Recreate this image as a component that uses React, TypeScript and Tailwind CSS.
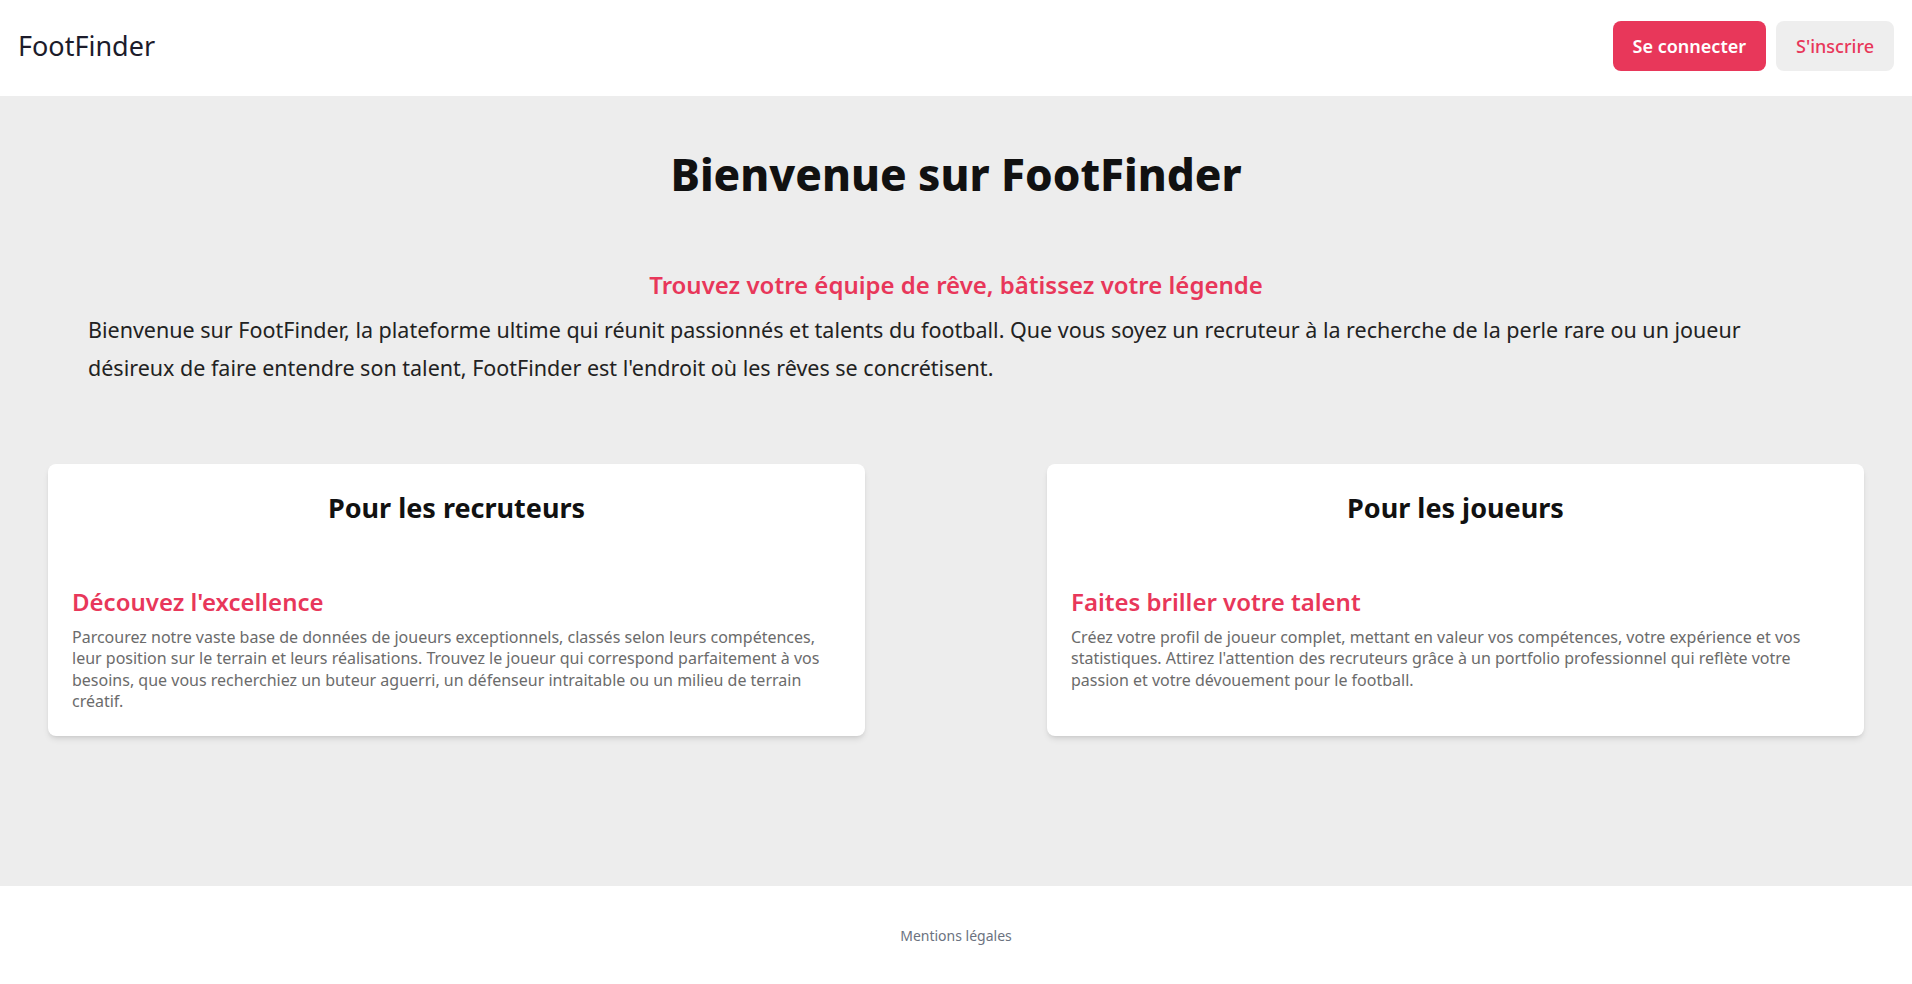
export default function App() {
  return (
    <div className="min-h-screen flex flex-col bg-white text-[#1a1a1a]" style={{ fontFamily: '"Noto Sans", "Open Sans", sans-serif' }}>
      <header className="h-24 flex items-center justify-between px-[18px] pb-1 bg-white">
        <span className="text-[27px] text-[#1c1c2b]">FootFinder</span>
        <div className="flex items-center gap-[10px]">
          <button className="h-[50px] px-5 rounded-lg bg-[#e8375a] text-white text-[18px] font-semibold">
            Se connecter
          </button>
          <button className="h-[50px] px-5 rounded-lg bg-[#eeeeee] text-[#e8375a] text-[18px] font-medium">
            S'inscrire
          </button>
        </div>
      </header>

      <main className="h-[790px] bg-[#ededed] flex flex-col">
        <h1 className="mt-[50px] text-center text-[44px] leading-[56px] font-extrabold text-[#111]">
          Bienvenue sur FootFinder
        </h1>
        <h2 className="mt-[67px] text-center text-[24px] leading-[32px] font-semibold text-[#e8375a]">
          Trouvez votre équipe de rêve, bâtissez votre légende
        </h2>
        <p className="mt-[10px] pl-[88px] pr-[130px] text-[21.5px] leading-[38px] text-[#222]">
          Bienvenue sur FootFinder, la plateforme ultime qui réunit passionnés et talents du football. Que vous soyez un recruteur à la recherche de la perle rare ou un joueur désireux de faire entendre son talent, FootFinder est l'endroit où les rêves se concrétisent.
        </p>

        <div className="mt-[77px] px-12 grid grid-cols-2 gap-[182px]">
          <div className="bg-white rounded-lg shadow-md px-6 pt-6 pb-6">
            <h3 className="text-center text-[27px] leading-[40px] font-bold text-[#111]">Pour les recruteurs</h3>
            <h4 className="mt-[58px] text-[24px] leading-[32px] font-semibold text-[#e8375a]">Découvez l'excellence</h4>
            <p className="mt-[9px] text-[16px] leading-[21.3px] text-[#6b6b6b]">
              Parcourez notre vaste base de données de joueurs exceptionnels, classés selon leurs compétences, leur position sur le terrain et leurs réalisations. Trouvez le joueur qui correspond parfaitement à vos besoins, que vous recherchiez un buteur aguerri, un défenseur intraitable ou un milieu de terrain créatif.
            </p>
          </div>
          <div className="bg-white rounded-lg shadow-md px-6 pt-6 pb-6">
            <h3 className="text-center text-[27px] leading-[40px] font-bold text-[#111]">Pour les joueurs</h3>
            <h4 className="mt-[58px] text-[24px] leading-[32px] font-semibold text-[#e8375a]">Faites briller votre talent</h4>
            <p className="mt-[9px] text-[16px] leading-[21.3px] text-[#6b6b6b]">
              Créez votre profil de joueur complet, mettant en valeur vos compétences, votre expérience et vos statistiques. Attirez l'attention des recruteurs grâce à un portfolio professionnel qui reflète votre passion et votre dévouement pour le football.
            </p>
          </div>
        </div>
      </main>

      <footer className="h-[98px] flex items-center justify-center bg-white">
        <span className="text-[14px] text-[#6b7280]">Mentions légales</span>
      </footer>
    </div>
  );
}
